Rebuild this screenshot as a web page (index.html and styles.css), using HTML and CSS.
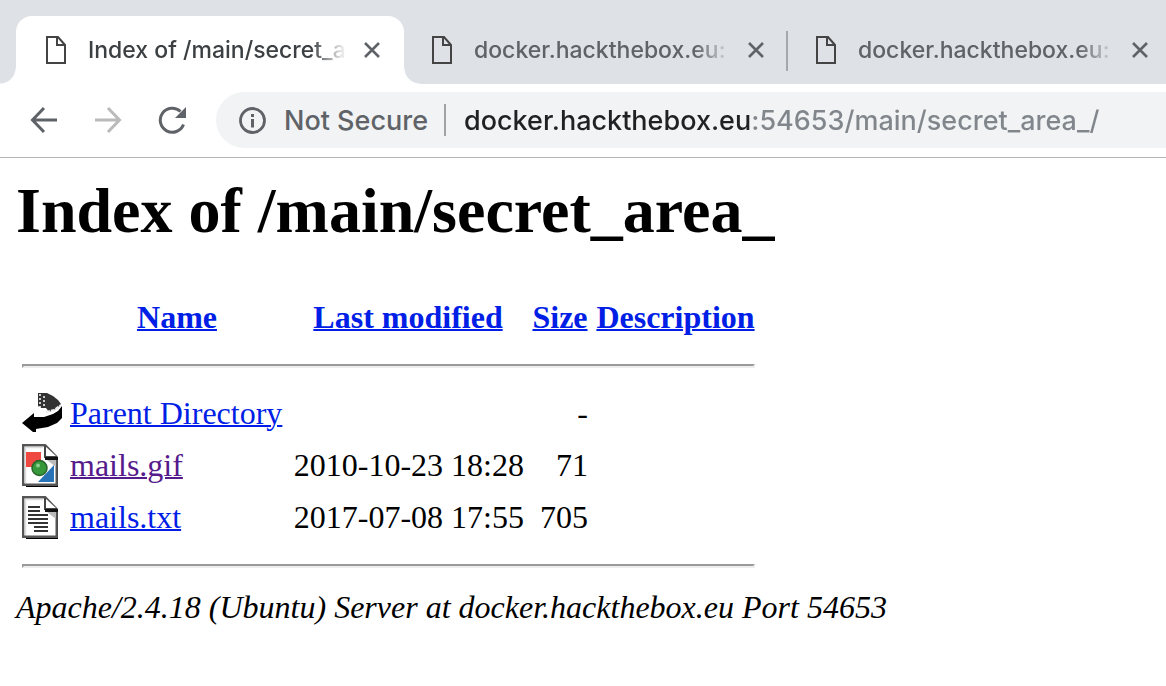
FILE: index.html
```html
<!DOCTYPE html>
<html lang="en">
<head>
<meta charset="utf-8">
<title>Index of /main/secret_area_</title>
<link rel="stylesheet" href="styles.css">
</head>
<body>
<svg class="defs" aria-hidden="true">
  <symbol id="page" viewBox="0 0 20 28"><path d="M1 1h11l7 8v18H1zM11 1v8h8" fill="none" stroke="#444" stroke-width="2"/></symbol>
  <symbol id="close" viewBox="0 0 18 18"><path d="M2 2l14 14M16 2L2 16" fill="none" stroke="#5f6368" stroke-width="2.6"/></symbol>
  <symbol id="sheet" viewBox="0 0 40 44"><path d="M4 41h30V14h2v29H4z" fill="#000"/><path d="M1.200 1.200h22l11.500 12v27.500H1.200z" fill="#fff" stroke="#555" stroke-width="2.400"/><path d="M3.500 39V3.500H21" fill="none" stroke="#ddd" stroke-width="1.500"/><path d="M25 16h9v7z" fill="#bbb"/><path d="M23 2v11h12" fill="#fff" stroke="#444" stroke-width="2"/><path d="M23 13h13v3H23z" fill="#111"/></symbol>
</svg>
<header class="browser">
  <nav class="tabs" aria-label="Tabs">
    <div class="tab tab-active">
      <svg class="favicon" aria-hidden="true"><use href="#page"/></svg>
      <button class="tab-title" type="button">Index of /main/secret_a</button>
      <button class="tab-close" type="button" aria-label="Close tab"><svg aria-hidden="true"><use href="#close"/></svg></button>
    </div>
    <div class="tab tab-divided">
      <svg class="favicon" aria-hidden="true"><use href="#page"/></svg>
      <button class="tab-title" type="button">docker.hackthebox.eu:</button>
      <button class="tab-close" type="button" aria-label="Close tab"><svg aria-hidden="true"><use href="#close"/></svg></button>
    </div>
    <div class="tab">
      <svg class="favicon" aria-hidden="true"><use href="#page"/></svg>
      <button class="tab-title" type="button">docker.hackthebox.eu:</button>
      <button class="tab-close" type="button" aria-label="Close tab"><svg aria-hidden="true"><use href="#close"/></svg></button>
    </div>
  </nav>
  <div class="toolbar">
    <button class="tool" type="button" aria-label="Back"><svg viewBox="0 0 28 28"><path d="M27 14H3M14 2L2.500 14 14 26" fill="none" stroke="#5f6368" stroke-width="3"/></svg></button>
    <button class="tool" type="button" aria-label="Forward" disabled><svg viewBox="0 0 28 28"><path d="M1 14h24M14 2l11.500 12L14 26" fill="none" stroke="#bababa" stroke-width="3"/></svg></button>
    <button class="tool" type="button" aria-label="Reload"><svg viewBox="0 0 28 28"><path d="M25.500 18.500A12 12 0 1 1 22.500 5.500" fill="none" stroke="#5f6368" stroke-width="3"/><path d="M28 1v11H17z" fill="#5f6368"/></svg></button>
    <div class="omnibox">
      <button class="security" type="button"><svg viewBox="0 0 28 28" aria-hidden="true"><circle cx="14.500" cy="14.500" r="12" fill="none" stroke="#5f6368" stroke-width="2.800"/><path d="M13 8h3v3h-3zM13 13h3v8.500h-3z" fill="#5f6368"/></svg>Not Secure</button>
      <input class="address" type="text" aria-label="Address" value="docker.hackthebox.eu:54653/main/secret_area_/">
    </div>
  </div>
</header>
<main class="listing">
  <h1>Index of /main/secret_area_</h1>
  <table>
    <colgroup><col class="col-icon"><col class="col-name"><col class="col-date"><col class="col-size"><col class="col-text"></colgroup>
    <thead>
      <tr><th><span class="icon"></span></th><th><a href="?C=N;O=D">Name</a></th><th><a href="?C=M;O=A">Last modified</a></th><th><a href="?C=S;O=A">Size</a></th><th><a href="?C=D;O=A">Description</a></th></tr>
      <tr><th colspan="5"><hr></th></tr>
    </thead>
    <tbody>
      <tr>
        <td><svg class="icon" viewBox="0 0 40 44" role="img" aria-label="Parent directory"><path d="M16 1h9l6 3 5 4 3 4-3 4-9 4-3-4h-5l-3-2z" fill="#333"/><path d="M18 2v15M22 4v14" stroke="#fff" stroke-width="1.500" stroke-dasharray="2 2"/><path d="M24 20l8-2 7-5" fill="none" stroke="#eee" stroke-width="2" stroke-dasharray="4 1"/><path d="M0 31l12-10v4h10l9-3 5-3 4-5v12l-5 5-9 4-12 2v3h-3z"/></svg></td>
        <td><a href="/main/">Parent Directory</a></td><td></td><td class="num">-</td><td></td>
      </tr>
      <tr>
        <td><svg class="icon" viewBox="0 0 40 44" role="img" aria-label="Image"><use href="#sheet"/><path d="M4 8h15v15H4z" fill="#ee4840"/><path d="M32 21v17H16z" fill="#2872b8"/><circle cx="17.500" cy="24" r="7.500" fill="#37983c" stroke="#27632a" stroke-width="1.500"/><circle cx="16" cy="21.500" r="2" fill="#8ccf8e"/></svg></td>
        <td><a class="visited" href="mails.gif">mails.gif</a></td><td class="num">2010-10-23 18:28</td><td class="num">71</td><td></td>
      </tr>
      <tr>
        <td><svg class="icon" viewBox="0 0 40 44" role="img" aria-label="Text"><use href="#sheet"/><path d="M6 11h12M6 15h12M6 19h20M6 23h20M6 27h20M12 31h14M12 35h14" stroke="#333" stroke-width="2.200"/></svg></td>
        <td><a href="mails.txt">mails.txt</a></td><td class="num">2017-07-08 17:55</td><td class="num">705</td><td></td>
      </tr>
      <tr><th colspan="5"><hr></th></tr>
    </tbody>
  </table>
  <address>Apache/2.4.18 (Ubuntu) Server at docker.hackthebox.eu Port 54653</address>
</main>
</body>
</html>
```
FILE: styles.css
```css
* { box-sizing: border-box; }
body { margin: 0; background: #fff; color: #000; overflow-x: hidden; }
button { border: 0; padding: 0; background: none; font: inherit; color: inherit; }
svg { display: block; }
.defs { position: absolute; width: 0; height: 0; }

.browser { font-family: Inter, Roboto, sans-serif; font-weight: 500; border-bottom: 1px solid #b4b5b7; }
.tabs { display: flex; overflow: hidden; padding: 16px 0 0 16px; background: #dee1e6; color: #5f6368; font-size: 23px; }
.tab { position: relative; flex: none; display: flex; align-items: center; width: 384px; height: 68px; padding: 0 23px 0 28px; }
.tab-active { width: 388px; padding-left: 30px; border-radius: 16px 16px 0 0; background: #fff; color: #3c4043; }
.tab-active::before, .tab-active::after { content: ""; position: absolute; bottom: 0; width: 16px; height: 16px; }
.tab-active::before { left: -16px; background: radial-gradient(circle at 0 0, transparent 15px, #fff 16px); }
.tab-active::after { right: -16px; background: radial-gradient(circle at 100% 0, transparent 15px, #fff 16px); }
.tab-divided::after { content: ""; position: absolute; right: 0; top: 15px; width: 2px; height: 40px; background: #a4a7ac; }
.favicon { flex: none; width: 20px; height: 28px; }
.tab-title { flex: 1; min-width: 0; margin: 0 16px 0 22px; white-space: nowrap; text-align: left; line-height: 32px; -webkit-mask-image: linear-gradient(to left, transparent, #000 36px); mask-image: linear-gradient(to left, transparent, #000 36px); }
.tab-close, .tab-close svg { flex: none; width: 18px; height: 18px; }

.toolbar { display: flex; align-items: center; gap: 36px; padding: 8px 0 9px 30px; }
.tool, .tool svg { flex: none; width: 28px; height: 28px; }
.omnibox { flex: 1; min-width: 0; display: flex; align-items: center; height: 56px; margin-left: -6px; padding-left: 22px; border-radius: 28px 0 0 28px; background: #f1f3f4; font-size: 27px; }
.security { flex: none; display: flex; align-items: center; gap: 18px; height: 32px; padding-right: 16px; border-right: 2px solid #a0a3a6; color: #5f6368; }
.security svg { width: 28px; height: 28px; }
.address { flex: 1; min-width: 0; height: 40px; margin-left: 18px; padding: 0; border: 0; outline: 0; font: inherit; color: #80868b; background: linear-gradient(to right, #202124 286px, #80868b 286px); -webkit-background-clip: text; background-clip: text; -webkit-text-fill-color: transparent; }

.listing { padding: 16px; font-family: "Liberation Serif", serif; font-size: 32px; }
h1 { margin: 0 0 43px; font-size: 64px; line-height: 73px; }
table { border-spacing: 4px; }
th, td { padding: 2px; line-height: 42px; vertical-align: top; }
td:first-child, th:first-child { line-height: 0; }
.col-icon { width: 44px; }
.col-name { width: 218px; }
.col-date { width: 236px; }
.col-size { width: 60px; }
.col-text { width: 163px; }
.num { text-align: right; }
.icon { display: block; width: 40px; height: 44px; }
a { color: #001ee6; text-decoration-thickness: 2px; }
a.visited { color: #551a8b; }
hr { height: 4px; margin: 16px 0; border: 2px solid; border-color: #9a9a9a #eee #eee #9a9a9a; }
address { line-height: 34px; }
```
